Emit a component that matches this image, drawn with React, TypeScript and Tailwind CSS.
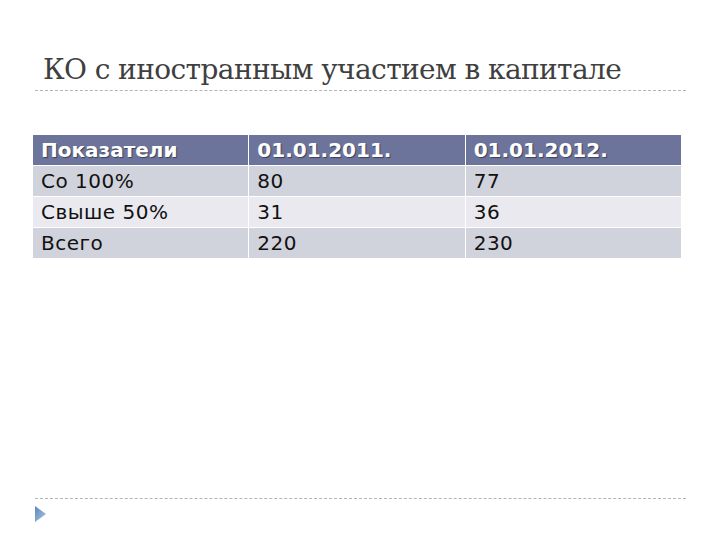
const rows = [
  ["Со 100%", "80", "77"],
  ["Свыше 50%", "31", "36"],
  ["Всего", "220", "230"],
];

function Dashed() {
  return (
    <div className="h-[2px] border-t border-dashed border-[#b4b4b4] mx-[35px] w-[651px]" />
  );
}

export default function App() {
  return (
    <div className="w-[720px] h-[540px] bg-white flex flex-col relative">
      <div className="pt-[52px] pl-[43px] h-[90px]">
        <h1 className="text-[28px] leading-[36px] text-[#3f3f3f] tracking-[-0.6px] font-['DejaVu_Serif',serif]">
          КО с иностранным участием в капитале
        </h1>
      </div>
      <Dashed />

      <div className="ml-[33px] mt-[43px] w-[648px] grid grid-cols-3 gap-x-px gap-y-px font-['DejaVu_Sans',sans-serif] text-[20px]">
        {["Показатели", "01.01.2011.", "01.01.2012."].map((h) => (
          <div
            key={h}
            className="h-[30px] bg-[#6c749c] text-white font-bold pl-2 flex items-center [text-shadow:1px_1px_1px_rgba(0,0,0,0.45)]"
          >
            {h}
          </div>
        ))}
        {rows.map((r, i) =>
          r.map((c, j) => (
            <div
              key={i + "-" + j}
              className={
                "h-[30px] pl-2 flex items-center text-[#111] tracking-[0.5px] " +
                (i % 2 === 0 ? "bg-[#d1d3dc]" : "bg-[#e9e9ef]")
              }
            >
              {c}
            </div>
          ))
        )}
      </div>

      <div className="mt-auto mb-[18px]">
        <Dashed />
        <div className="ml-[35px] mt-[6px] h-[16px]">
          <svg width="11" height="16" viewBox="0 0 11 16" className="block">
            <defs>
              <linearGradient id="tri" x1="0" y1="0" x2="1" y2="1">
                <stop offset="0" stopColor="#5f86b8" />
                <stop offset="1" stopColor="#a9c6e6" />
              </linearGradient>
            </defs>
            <path d="M0 0 L11 8 L0 16 Z" fill="url(#tri)" />
          </svg>
        </div>
      </div>
    </div>
  );
}
